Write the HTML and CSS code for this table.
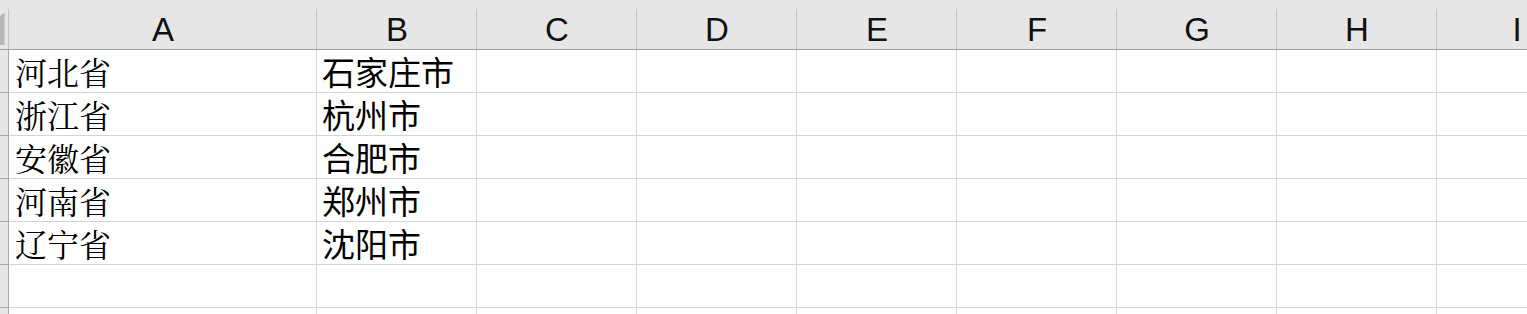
FILE: index.html
```html
<!DOCTYPE html>
<html lang="zh">
<head>
  <meta charset="UTF-8">
  <title>工作表</title>
  <link rel="stylesheet" href="styles.css">
</head>
<body>
  <div class="window">
    <div class="sheet">
      <!-- 欄標題 -->
      <div class="corner">
        <svg width="8" height="49" viewBox="0 0 8 49"><polygon points="0,16 4.5,12.5 4.5,45 0,45" fill="#b7b7b7"/></svg>
      </div>
      <div class="col-head">A</div>
      <div class="col-head">B</div>
      <div class="col-head">C</div>
      <div class="col-head">D</div>
      <div class="col-head">E</div>
      <div class="col-head">F</div>
      <div class="col-head">G</div>
      <div class="col-head">H</div>
      <div class="col-head">I</div>

      <!-- 第 1 列 -->
      <div class="row-head"></div>
      <div class="cell prov">河北省</div>
      <div class="cell city">石家庄市</div>
      <div class="cell"></div><div class="cell"></div><div class="cell"></div><div class="cell"></div><div class="cell"></div><div class="cell"></div><div class="cell"></div>

      <!-- 第 2 列 -->
      <div class="row-head"></div>
      <div class="cell prov">浙江省</div>
      <div class="cell city">杭州市</div>
      <div class="cell"></div><div class="cell"></div><div class="cell"></div><div class="cell"></div><div class="cell"></div><div class="cell"></div><div class="cell"></div>

      <!-- 第 3 列 -->
      <div class="row-head"></div>
      <div class="cell prov">安徽省</div>
      <div class="cell city">合肥市</div>
      <div class="cell"></div><div class="cell"></div><div class="cell"></div><div class="cell"></div><div class="cell"></div><div class="cell"></div><div class="cell"></div>

      <!-- 第 4 列 -->
      <div class="row-head"></div>
      <div class="cell prov">河南省</div>
      <div class="cell city">郑州市</div>
      <div class="cell"></div><div class="cell"></div><div class="cell"></div><div class="cell"></div><div class="cell"></div><div class="cell"></div><div class="cell"></div>

      <!-- 第 5 列 -->
      <div class="row-head"></div>
      <div class="cell prov">辽宁省</div>
      <div class="cell city">沈阳市</div>
      <div class="cell"></div><div class="cell"></div><div class="cell"></div><div class="cell"></div><div class="cell"></div><div class="cell"></div><div class="cell"></div>

      <!-- 空白列 -->
      <div class="row-head"></div>
      <div class="cell"></div><div class="cell"></div><div class="cell"></div><div class="cell"></div><div class="cell"></div><div class="cell"></div><div class="cell"></div><div class="cell"></div><div class="cell"></div>

      <div class="row-head"></div>
      <div class="cell"></div><div class="cell"></div><div class="cell"></div><div class="cell"></div><div class="cell"></div><div class="cell"></div><div class="cell"></div><div class="cell"></div><div class="cell"></div>
    </div>
  </div>
</body>
</html>
```

FILE: styles.css
```css
* {
  box-sizing: border-box;
}
body {
  margin: 0;
  background: #fff;
  font-family: "Liberation Sans", Arial, sans-serif;
}
/* 可視範圍，超出的欄列被裁掉 */
.window {
  height: 100vh;
  overflow: hidden;
}
.sheet {
  display: grid;
  grid-template-columns: 9px 308px repeat(8, 160px);
  grid-template-rows: 50px;
  grid-auto-rows: 43px;
  width: max-content;
}
/* 左上角 */
.corner {
  background: #e6e6e6 linear-gradient(#c4c4c4, #c4c4c4) right 9px / 1px calc(100% - 9px) no-repeat;
  border-bottom: 1px solid #9f9f9f;
}
.corner svg {
  display: block;
}
/* 欄標題 A, B, C ... */
.col-head {
  display: flex;
  justify-content: center;
  align-items: flex-end;
  font-size: 33px;
  color: #111;
  background: #e6e6e6 linear-gradient(#c4c4c4, #c4c4c4) right 9px / 1px calc(100% - 9px) no-repeat;
  border-bottom: 1px solid #9f9f9f;
}
/* 列標題 (僅露出一小段) */
.row-head {
  background: #e6e6e6;
  border-right: 1px solid #a9a9a9;
  border-bottom: 1px solid #a9a9a9;
}
.cell {
  display: flex;
  align-items: center;
  padding-left: 6px;
  border-right: 1px solid #d4d4d4;
  border-bottom: 1px solid #d4d4d4;
  color: #000;
  line-height: 1;
  white-space: nowrap;
  overflow: hidden;
}
.prov {
  font-family: "Noto Serif CJK SC", "Liberation Serif", "Noto Sans CJK SC", serif;
  font-size: 32px;
}
.city {
  font-family: "Noto Sans CJK SC", sans-serif;
  font-size: 33px;
  padding-left: 5px;
}
```
